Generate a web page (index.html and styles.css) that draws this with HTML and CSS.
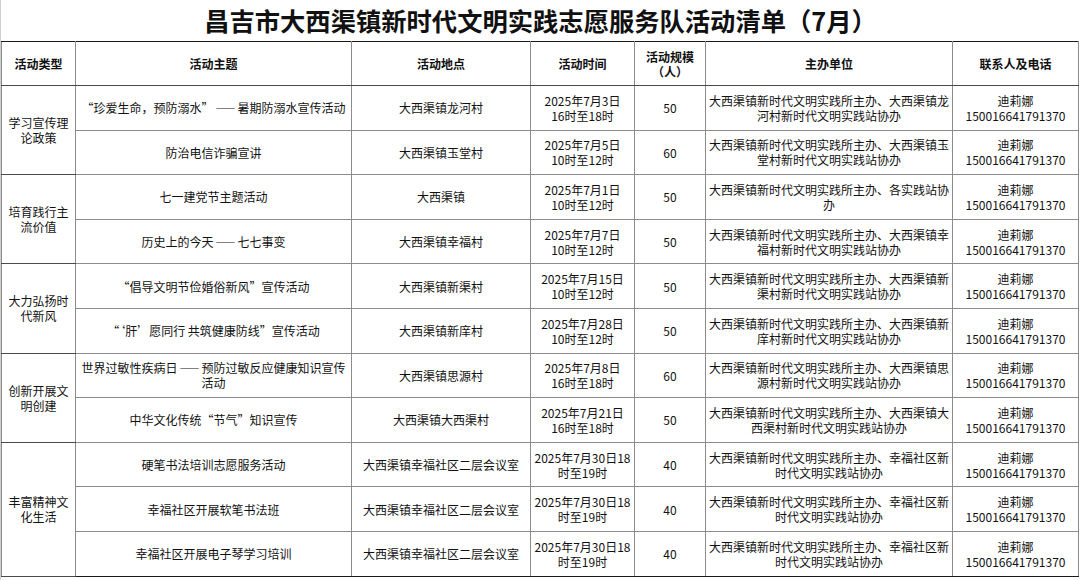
FILE: index.html
```html
<!DOCTYPE html>
<html lang="zh-CN">
<head>
<meta charset="utf-8">
<title>昌吉市大西渠镇新时代文明实践志愿服务队活动清单（7月）</title>
<link rel="stylesheet" href="styles.css">
</head>
<body>
<div class="page">
  <h1 class="title">昌吉市大西渠镇新时代文明实践志愿服务队活动清单（7月）</h1>
  <table class="list">
    <colgroup>
      <col class="c-type"><col class="c-theme"><col class="c-place"><col class="c-time"><col class="c-scale"><col class="c-org"><col class="c-contact">
    </colgroup>
    <thead>
      <tr>
        <th>活动类型</th>
        <th>活动主题</th>
        <th>活动地点</th>
        <th>活动时间</th>
        <th><span class="ln">活动规模</span><span class="ln">（人）</span></th>
        <th>主办单位</th>
        <th>联系人及电话</th>
      </tr>
    </thead>
    <tbody>
      <tr class="group-start">
        <td rowspan="2" class="type"><span class="ln">学习宣传理</span><span class="ln">论政策</span></td>
        <td>“珍爱生命，预防溺水”<span class="dash">——</span>暑期防溺水宣传活动</td>
        <td>大西渠镇龙河村</td>
        <td><span class="ln">2025年7月3日</span><span class="ln">16时至18时</span></td>
        <td>50</td>
        <td><span class="ln">大西渠镇新时代文明实践所主办、大西渠镇龙</span><span class="ln">河村新时代文明实践站协办</span></td>
        <td><span class="ln">迪莉娜</span><span class="ln">150016641791370</span></td>
      </tr>
      <tr>
        <td>防治电信诈骗宣讲</td>
        <td>大西渠镇玉堂村</td>
        <td><span class="ln">2025年7月5日</span><span class="ln">10时至12时</span></td>
        <td>60</td>
        <td><span class="ln">大西渠镇新时代文明实践所主办、大西渠镇玉</span><span class="ln">堂村新时代文明实践站协办</span></td>
        <td><span class="ln">迪莉娜</span><span class="ln">150016641791370</span></td>
      </tr>
      <tr class="group-start">
        <td rowspan="2" class="type"><span class="ln">培育践行主</span><span class="ln">流价值</span></td>
        <td>七一建党节主题活动</td>
        <td>大西渠镇</td>
        <td><span class="ln">2025年7月1日</span><span class="ln">10时至12时</span></td>
        <td>50</td>
        <td><span class="ln">大西渠镇新时代文明实践所主办、各实践站协</span><span class="ln">办</span></td>
        <td><span class="ln">迪莉娜</span><span class="ln">150016641791370</span></td>
      </tr>
      <tr>
        <td>历史上的今天<span class="dash">——</span>七七事变</td>
        <td>大西渠镇幸福村</td>
        <td><span class="ln">2025年7月7日</span><span class="ln">10时至12时</span></td>
        <td>50</td>
        <td><span class="ln">大西渠镇新时代文明实践所主办、大西渠镇幸</span><span class="ln">福村新时代文明实践站协办</span></td>
        <td><span class="ln">迪莉娜</span><span class="ln">150016641791370</span></td>
      </tr>
      <tr class="group-start">
        <td rowspan="2" class="type"><span class="ln">大力弘扬时</span><span class="ln">代新风</span></td>
        <td>“倡导文明节俭婚俗新风”宣传活动</td>
        <td>大西渠镇新渠村</td>
        <td><span class="ln">2025年7月15日</span><span class="ln">10时至12时</span></td>
        <td>50</td>
        <td><span class="ln">大西渠镇新时代文明实践所主办、大西渠镇新</span><span class="ln">渠村新时代文明实践站协办</span></td>
        <td><span class="ln">迪莉娜</span><span class="ln">150016641791370</span></td>
      </tr>
      <tr>
        <td>“‘肝’愿同行 共筑健康防线”宣传活动</td>
        <td>大西渠镇新庠村</td>
        <td><span class="ln">2025年7月28日</span><span class="ln">10时至12时</span></td>
        <td>50</td>
        <td><span class="ln">大西渠镇新时代文明实践所主办、大西渠镇新</span><span class="ln">庠村新时代文明实践站协办</span></td>
        <td><span class="ln">迪莉娜</span><span class="ln">150016641791370</span></td>
      </tr>
      <tr class="group-start">
        <td rowspan="2" class="type"><span class="ln">创新开展文</span><span class="ln">明创建</span></td>
        <td><span class="ln">世界过敏性疾病日<span class="dash">——</span>预防过敏反应健康知识宣传</span><span class="ln">活动</span></td>
        <td>大西渠镇思源村</td>
        <td><span class="ln">2025年7月8日</span><span class="ln">16时至18时</span></td>
        <td>60</td>
        <td><span class="ln">大西渠镇新时代文明实践所主办、大西渠镇思</span><span class="ln">源村新时代文明实践站协办</span></td>
        <td><span class="ln">迪莉娜</span><span class="ln">150016641791370</span></td>
      </tr>
      <tr>
        <td>中华文化传统“节气”知识宣传</td>
        <td>大西渠镇大西渠村</td>
        <td><span class="ln">2025年7月21日</span><span class="ln">16时至18时</span></td>
        <td>50</td>
        <td><span class="ln">大西渠镇新时代文明实践所主办、大西渠镇大</span><span class="ln">西渠村新时代文明实践站协办</span></td>
        <td><span class="ln">迪莉娜</span><span class="ln">150016641791370</span></td>
      </tr>
      <tr class="group-start">
        <td rowspan="3" class="type"><span class="ln">丰富精神文</span><span class="ln">化生活</span></td>
        <td>硬笔书法培训志愿服务活动</td>
        <td>大西渠镇幸福社区二层会议室</td>
        <td><span class="ln">2025年7月30日18</span><span class="ln">时至19时</span></td>
        <td>40</td>
        <td><span class="ln">大西渠镇新时代文明实践所主办、幸福社区新</span><span class="ln">时代文明实践站协办</span></td>
        <td><span class="ln">迪莉娜</span><span class="ln">150016641791370</span></td>
      </tr>
      <tr>
        <td>幸福社区开展软笔书法班</td>
        <td>大西渠镇幸福社区二层会议室</td>
        <td><span class="ln">2025年7月30日18</span><span class="ln">时至19时</span></td>
        <td>40</td>
        <td><span class="ln">大西渠镇新时代文明实践所主办、幸福社区新</span><span class="ln">时代文明实践站协办</span></td>
        <td><span class="ln">迪莉娜</span><span class="ln">150016641791370</span></td>
      </tr>
      <tr>
        <td>幸福社区开展电子琴学习培训</td>
        <td>大西渠镇幸福社区二层会议室</td>
        <td><span class="ln">2025年7月30日18</span><span class="ln">时至19时</span></td>
        <td>40</td>
        <td><span class="ln">大西渠镇新时代文明实践所主办、幸福社区新</span><span class="ln">时代文明实践站协办</span></td>
        <td><span class="ln">迪莉娜</span><span class="ln">150016641791370</span></td>
      </tr>
    </tbody>
  </table>
</div>
</body>
</html>
```

FILE: styles.css
```css
html, body {
  margin: 0;
  padding: 0;
  background: #ffffff;
}

.page {
  width: 1079px;
  height: 580px;
  border-left: 1px solid #cfcfcf;
  font-family: "Noto Sans CJK SC", "Liberation Sans", sans-serif;
  color: #111111;
  overflow: hidden;
}

.title {
  margin: 0;
  height: 41px;
  line-height: 41px;
  text-align: center;
  font-size: 25.3px;
  font-weight: 700;
  color: #111111;
}

.list {
  table-layout: fixed;
  border-collapse: collapse;
  width: 1077px;
  border: 1px solid #1a1a1a;
}

.c-type { width: 74px; }
.c-theme { width: 276px; }
.c-place { width: 179px; }
.c-time { width: 104px; }
.c-scale { width: 71px; }
.c-org { width: 247px; }
.c-contact { width: 126px; }

.list th,
.list td {
  padding: 0;
  text-align: center;
  vertical-align: middle;
  font-size: 12px;
  line-height: 15px;
  white-space: nowrap;
  border: 1px solid #8c8c8c;
}

.ln {
  display: block;
  height: 15px;
  line-height: 15px;
}

.dash {
  letter-spacing: 2px;
  font-size: 10px;
  margin-left: 2px;
}

.list th {
  height: 43px;
  font-weight: 700;
  color: #111111;
  border-top: 1px solid #1a1a1a;
  border-bottom: 1px solid #4a4a4a;
}

.list tbody td {
  height: 43.6px;
  font-weight: 400;
}

.list tr.group-start td {
  border-top: 1px solid #4a4a4a;
}

.list td.type {
  border-bottom: 1px solid #4a4a4a;
}

.list tr:last-child td {
  border-bottom: 1px solid #1a1a1a;
}
```
